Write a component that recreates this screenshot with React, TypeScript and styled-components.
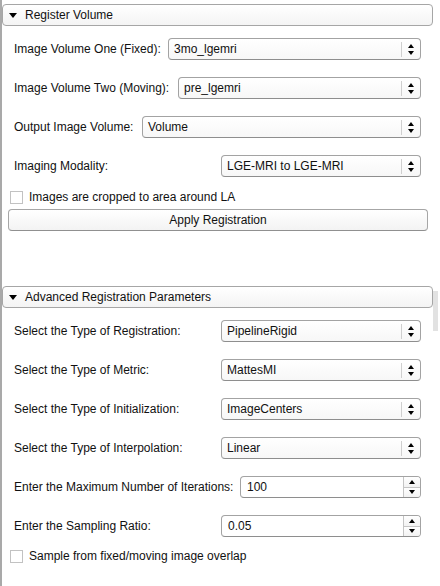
import React from "react";
import styled, { createGlobalStyle } from "styled-components";

const GlobalStyle = createGlobalStyle`
  html, body {
    margin: 0;
    padding: 0;
    background: #ffffff;
  }
  body {
    font-family: "Liberation Sans", Arial, sans-serif;
    font-size: 12px;
    color: #111111;
  }
`;

const StPage = styled.div`
  position: relative;
  width: 438px;
  height: 586px;
  border-left: 2px solid #a9a9a9;
  overflow: hidden;
  padding-top: 4px;
  box-sizing: border-box;
`;

const StHeader = styled.div<{ top: number }>`
  display: flex;
  align-items: center;
  gap: 8px;
  width: 431px;
  height: 22px;
  margin-top: ${({ top }) => top}px;
  padding-left: 6px;
  box-sizing: border-box;
  border: 1px solid #a6a6a6;
  border-radius: 4px;
  background: linear-gradient(#ffffff, #f4f4f4);
  font-size: 12px;
`;

const StTriangle = styled.span`
  width: 0;
  height: 0;
  border-left: 4.5px solid transparent;
  border-right: 4.5px solid transparent;
  border-top: 5px solid #000000;
`;

const StBody = styled.div<{ top: number }>`
  display: flex;
  flex-direction: column;
  padding: ${({ top }) => top}px 12px 0 6px;
`;

const StRowList = styled.div`
  display: flex;
  flex-direction: column;
  gap: 17px;
`;

const StRow = styled.div`
  display: flex;
  align-items: center;
  height: 22px;
  padding: 0 5px 0 6px;
`;

const StLabel = styled.span<{ width: number }>`
  flex: 0 0 ${({ width }) => width}px;
  white-space: nowrap;
`;

const StCombo = styled.div`
  flex: 1;
  display: flex;
  align-items: center;
  height: 22px;
  box-sizing: border-box;
  padding-left: 5px;
  border: 1px solid #a3a3a3;
  border-bottom-color: #8e8e8e;
  border-radius: 4px;
  background: linear-gradient(#ffffff, #f7f7f7);
`;

const StComboArrows = styled.div`
  margin-left: auto;
  width: 18px;
  height: 15px;
  border-left: 1px solid #cfcfcf;
  display: flex;
  flex-direction: column;
  align-items: center;
  justify-content: center;
  gap: 3px;
`;

const StArrow = styled.span<{ dir: "up" | "down" }>`
  width: 0;
  height: 0;
  border-left: 3.5px solid transparent;
  border-right: 3.5px solid transparent;
  ${({ dir }) =>
    dir === "up"
      ? "border-bottom: 4px solid #000000;"
      : "border-top: 4px solid #000000;"}
`;

const StSpin = styled.div`
  flex: 1;
  display: flex;
  height: 22px;
  box-sizing: border-box;
  border: 1px solid #a3a3a3;
  border-bottom-color: #8e8e8e;
  border-radius: 4px;
  background: #ffffff;
  overflow: hidden;
`;

const StSpinValue = styled.span`
  flex: 1;
  display: flex;
  align-items: center;
  padding-left: 6px;
`;

const StSpinButtons = styled.div`
  width: 16px;
  display: flex;
  flex-direction: column;
  border-left: 1px solid #c4c4c4;
`;

const StSpinButton = styled.div<{ first?: boolean }>`
  flex: 1;
  display: flex;
  align-items: center;
  justify-content: center;
  background: linear-gradient(#ffffff, #f2f2f2);
  ${({ first }) => (first ? "border-bottom: 1px solid #c4c4c4;" : "")}
`;

const StCheckRow = styled.label<{ top: number }>`
  display: flex;
  align-items: center;
  gap: 6px;
  margin-top: ${({ top }) => top}px;
  padding-left: 2px;
  height: 14px;
`;

const StCheckBox = styled.span`
  width: 13px;
  height: 13px;
  box-sizing: border-box;
  border: 1px solid #c2c2c2;
  background: #ffffff;
`;

const StButton = styled.button`
  margin-top: 5px;
  height: 22px;
  width: 420px;
  border: 1px solid #a6a6a6;
  border-bottom-color: #909090;
  border-radius: 4px;
  background: linear-gradient(#ffffff, #f3f3f3);
  font-family: inherit;
  font-size: 12px;
  color: #111111;
  padding: 0;
`;

const StScrollThumb = styled.div`
  position: absolute;
  right: 0;
  top: 291px;
  width: 5px;
  height: 40px;
  background: #e2e2e2;
`;

type Field = {
  label: string;
  width: number;
  value: string;
  kind: "combo" | "spin";
};

const registerRows: Field[] = [
  { label: "Image Volume One (Fixed):", width: 154, value: "3mo_lgemri", kind: "combo" },
  { label: "Image Volume Two (Moving):", width: 164, value: "pre_lgemri", kind: "combo" },
  { label: "Output Image Volume:", width: 128, value: "Volume", kind: "combo" },
  { label: "Imaging Modality:", width: 207, value: "LGE-MRI to LGE-MRI", kind: "combo" },
];

const advancedRows: Field[] = [
  { label: "Select the Type of Registration:", width: 207, value: "PipelineRigid", kind: "combo" },
  { label: "Select the Type of Metric:", width: 207, value: "MattesMI", kind: "combo" },
  { label: "Select the Type of Initialization:", width: 207, value: "ImageCenters", kind: "combo" },
  { label: "Select the Type of Interpolation:", width: 207, value: "Linear", kind: "combo" },
  { label: "Enter the Maximum Number of Iterations:", width: 226, value: "100", kind: "spin" },
  { label: "Enter the Sampling Ratio:", width: 207, value: "0.05", kind: "spin" },
];

const FieldRow = ({ field }: { field: Field }) => (
  <StRow>
    <StLabel width={field.width}>{field.label}</StLabel>
    {field.kind === "combo" ? (
      <StCombo>
        <span>{field.value}</span>
        <StComboArrows>
          <StArrow dir="up" />
          <StArrow dir="down" />
        </StComboArrows>
      </StCombo>
    ) : (
      <StSpin>
        <StSpinValue>{field.value}</StSpinValue>
        <StSpinButtons>
          <StSpinButton first>
            <StArrow dir="up" />
          </StSpinButton>
          <StSpinButton>
            <StArrow dir="down" />
          </StSpinButton>
        </StSpinButtons>
      </StSpin>
    )}
  </StRow>
);

const App = () => {
  return (
    <>
      <GlobalStyle />
      <StPage>
        <StHeader top={0}>
          <StTriangle />
          Register Volume
        </StHeader>
        <StBody top={12}>
          <StRowList>
            {registerRows.map((f) => (
              <FieldRow key={f.label} field={f} />
            ))}
          </StRowList>
          <StCheckRow top={13}>
            <StCheckBox />
            Images are cropped to area around LA
          </StCheckRow>
          <StButton>Apply Registration</StButton>
        </StBody>
        <StHeader top={55}>
          <StTriangle />
          Advanced Registration Parameters
        </StHeader>
        <StBody top={12}>
          <StRowList>
            {advancedRows.map((f) => (
              <FieldRow key={f.label} field={f} />
            ))}
          </StRowList>
          <StCheckRow top={12}>
            <StCheckBox />
            Sample from fixed/moving image overlap
          </StCheckRow>
        </StBody>
        <StScrollThumb />
      </StPage>
    </>
  );
};

export default App;
